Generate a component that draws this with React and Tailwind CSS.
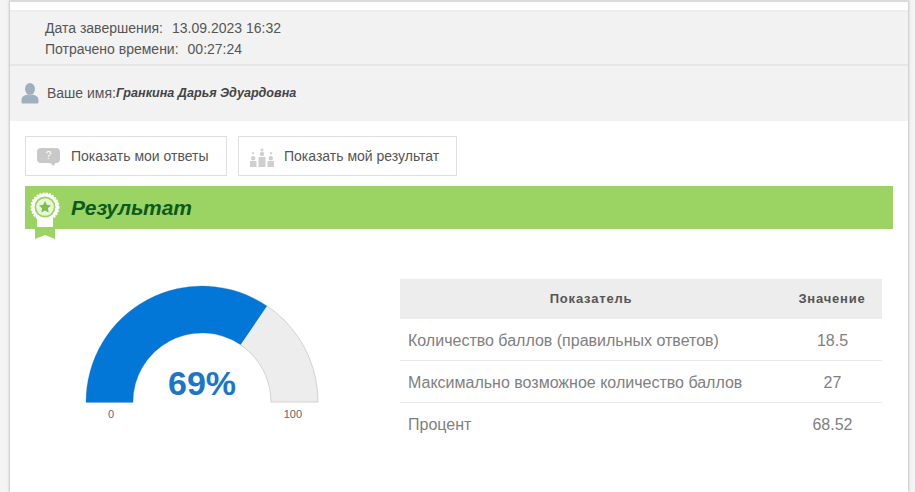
import React from 'react';

const font = { fontFamily: '"Liberation Sans", Arial, sans-serif' };

function UserIcon() {
  return (
    <svg width="18" height="21" viewBox="0 0 18 21" className="shrink-0">
      <ellipse cx="9" cy="6" rx="5" ry="6" fill="#9fb0bd" />
      <path d="M0.5 17c0-3.5 3-4.5 5.500-5.500 1.800 1 4.200 1 6 0 2.500 1 5.500 2 5.500 5.500v2c0 1-.8 1.500-1.500 1.500H2c-.8 0-1.500-.5-1.500-1.500z" fill="#9fb0bd" />
    </svg>
  );
}

function BubbleIcon() {
  return (
    <svg width="23" height="18" viewBox="0 0 23 18" className="shrink-0 mt-[2px]">
      <path d="M4 0h15a4 4 0 0 1 4 4v7a4 4 0 0 1-4 4h-1l-1 3-4-3H4a4 4 0 0 1-4-4V4a4 4 0 0 1 4-4z" fill="#c9c9c9" />
      <text x="11.500" y="11" textAnchor="middle" fontSize="10" fill="#fff" style={font}>?</text>
    </svg>
  );
}

function PodiumIcon() {
  return (
    <svg width="24" height="19" viewBox="0 0 24 19" className="shrink-0 mt-[3px]">
      <g fill="#cfcfcf">
        <rect x="0" y="13" width="6.500" height="6" />
        <rect x="8.500" y="9" width="7" height="10" />
        <rect x="17.500" y="13" width="6.500" height="6" />
        <circle cx="3.200" cy="10.200" r="2.200" />
        <circle cx="12" cy="6" r="2.200" />
        <circle cx="20.800" cy="10.200" r="2.200" />
        <path d="M12 0l.7 1.300 1.300.2-1 1 .2 1.200-1.200-.6-1.200.6.2-1.200-1-1 1.300-.2zM3 3.500l.6 1 1 .2-.8.700.2 1-1-.5-1 .5.200-1-.8-.7 1-.2zM21 3.500l.6 1 1 .2-.8.700.2 1-1-.5-1 .5.200-1-.8-.7 1-.2z" />
      </g>
    </svg>
  );
}

function RibbonBadge() {
  return (
    <svg width="32" height="48" viewBox="0 0 32 48" className="absolute left-[4px] top-[6px]">
      <path d="M6 34h20v13l-10-4-10 4z" fill="#9bd462" />
      <rect x="8" y="24" width="16" height="11" fill="#fff" />
      <circle cx="16" cy="15" r="13.500" fill="#fff" stroke="#fff" strokeWidth="2" strokeDasharray="2 1.200" />
      <circle cx="16" cy="15" r="10.500" fill="#9bd462" />
      <circle cx="16" cy="15" r="8.800" fill="#e9f6dc" />
      <path d="M16 9l1.800 3.800 4.200.6-3.100 2.900.8 4.200-3.700-2.100-3.700 2.100.8-4.200-3.100-2.900 4.200-.6z" fill="#7cc04a" />
    </svg>
  );
}

function Gauge() {
  return (
    <div className="relative w-[236px] h-[118px] shrink-0">
      <svg width="236" height="118" viewBox="0 0 236 118" className="block">
        <path d="M2 117A116 116 0 0 1 234 117H187A69 69 0 0 0 49 117Z" fill="#ededed" stroke="#d2d2d2" strokeWidth="1" />
        <path d="M2 117.500A116 116 0 0 1 183 21 L156.600 59.800A69 69 0 0 0 49 117.500Z" fill="#0277d8" />
      </svg>
      <div className="absolute left-0 right-0 top-[77px] text-center text-[34px] leading-[42px] font-bold text-[#1a76c8]">69%</div>
    </div>
  );
}

const rows = [
  ['Количество баллов (правильных ответов)', '18.5'],
  ['Максимально возможное количество баллов', '27'],
  ['Процент', '68.52'],
];

export default function App() {
  return (
    <div className="h-[492px] w-[915px] overflow-hidden bg-[#f4f4f4] pl-[10px] pr-[7px]" style={font}>
      <div className="h-full bg-white border-t-[2px] border-[#dcdcdc] shadow-[0_0_3px_rgba(0,0,0,0.35)]">
        <div className="mt-[8px] bg-[#f2f2f2] border-t-[2px] border-[#ededed] text-[14px] text-[#555]">
          <div className="h-[54px] border-b-[2px] border-[#e6e6e6] pl-[35px] pt-[6px] leading-[21px]">
            <div className="flex">
              <span>Дата завершения:</span>
              <span className="ml-[9px]">13.09.2023 16:32</span>
            </div>
            <div className="flex">
              <span>Потрачено времени:</span>
              <span className="ml-[9px]">00:27:24</span>
            </div>
          </div>
          <div className="h-[55px] flex items-center pl-[11px]">
            <UserIcon />
            <span className="ml-[8px] text-[#555]">Ваше имя:</span>
            <span className="italic font-bold text-[12.6px] text-[#444]">Гранкина Дарья Эдуардовна</span>
          </div>
        </div>

        <div className="px-[15px] pt-[15px]">
          <div className="flex gap-[11px]">
            <div className="flex items-center h-[40px] w-[202px] border border-[#e0e0e0] pl-[11px] gap-[11px] text-[14px] text-[#555]">
              <BubbleIcon />
              <span>Показать мои ответы</span>
            </div>
            <div className="flex items-center h-[40px] w-[219px] border border-[#e0e0e0] pl-[11px] gap-[10px] text-[14px] text-[#555]">
              <PodiumIcon />
              <span>Показать мой результат</span>
            </div>
          </div>

          <div className="relative mt-[10px] h-[43px] w-[868px] bg-[#9bd462] flex items-center pl-[46px]">
            <RibbonBadge />
            <span className="italic font-bold text-[21px] text-[#0b5a1e]">Результат</span>
          </div>

          <div className="flex mt-[50px]">
            <div className="ml-[59px] mt-[6px] w-[236px] shrink-0">
              <Gauge />
              <div className="flex justify-between pl-[24px] pr-[18px] mt-[5px] text-[11px] leading-[13px] text-[#666]">
                <span>0</span>
                <span>100</span>
              </div>
            </div>
            <div className="ml-[80px] w-[482px] text-[#808080]">
              <div className="flex items-center h-[40px] bg-[#ededed] text-[13px] font-bold text-[#555] tracking-[0.8px]">
                <div className="w-[382px] text-center">Показатель</div>
                <div className="flex-1 text-center">Значение</div>
              </div>
              {rows.map((row, i) => (
                <div key={row[0]} className={`flex items-center h-[42px] pt-[2px] text-[16px] ${i < 2 ? 'border-b border-[#e8e8e8]' : ''}`}>
                  <div className="w-[382px] pl-[8px]">{row[0]}</div>
                  <div className="flex-1 text-center pl-[1px]">{row[1]}</div>
                </div>
              ))}
            </div>
          </div>
        </div>
      </div>
    </div>
  );
}
